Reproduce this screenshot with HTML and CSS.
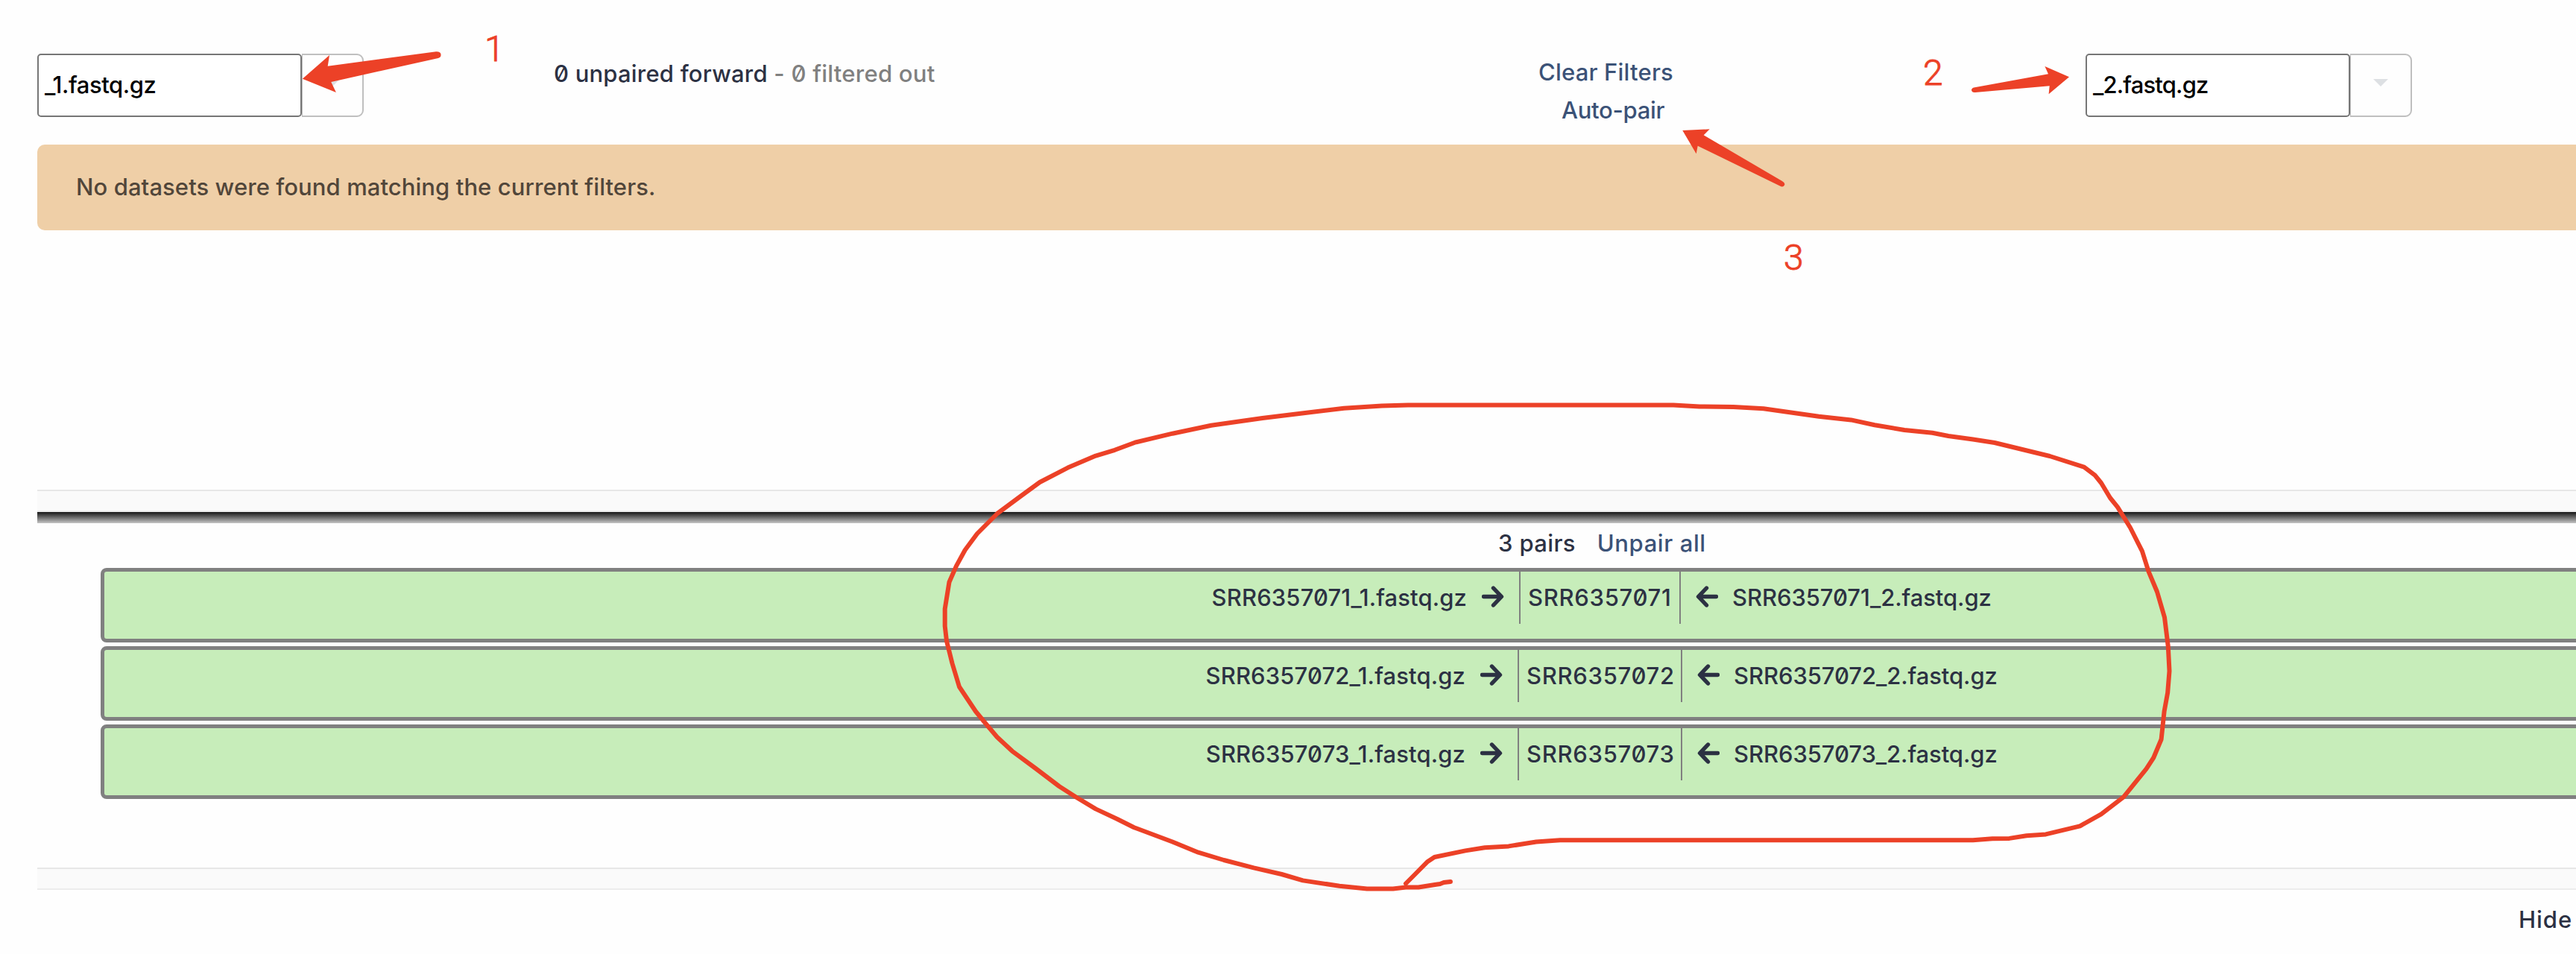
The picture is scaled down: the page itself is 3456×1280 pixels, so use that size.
FILE: index.html
```html
<!DOCTYPE html>
<html lang="en">
<head>
<meta charset="utf-8">
<title>Build list of dataset pairs</title>
<link rel="stylesheet" href="styles.css">
</head>
<body>
<svg class="sprite" aria-hidden="true">
  <symbol id="arrow-right" viewBox="0 0 30 29">
    <path d="M2.5 14.5H26M15.500 3L26.5 14.5L15.500 26" fill="none" stroke="currentColor" stroke-width="5.400" stroke-linecap="round" stroke-linejoin="round"/>
  </symbol>
  <symbol id="arrow-left" viewBox="0 0 30 29">
    <path d="M27.5 14.5H4M14.5 3L3.5 14.5L14.5 26" fill="none" stroke="currentColor" stroke-width="5.400" stroke-linecap="round" stroke-linejoin="round"/>
  </symbol>
</svg>

<main class="creator">
  <header class="filters">
    <div class="combo">
      <div class="combo-input combo-forward">_1.fastq.gz</div>
      <div class="combo-toggle"><span class="caret"></span></div>
    </div>
    <div class="status"><strong class="count">0 unpaired forward</strong> <span class="muted">- 0 filtered out</span></div>
    <nav class="actions">
      <a class="link clear">Clear Filters</a>
      <a class="link autopair">Auto-pair</a>
    </nav>
    <div class="combo">
      <div class="combo-input combo-reverse">_2.fastq.gz</div>
      <div class="combo-toggle"><span class="caret"></span></div>
    </div>
  </header>

  <section class="unpaired">
    <div class="alert">No datasets were found matching the current filters.</div>
  </section>

  <div class="divider"></div>

  <section class="paired">
    <div class="paired-header"><span class="pair-count">3 pairs</span><a class="link unpair">Unpair all</a></div>
    <ol class="pairs">
      <li class="pair">
        <div class="forward"><span class="forward-name">SRR6357071_1.fastq.gz</span><svg class="arrow"><use href="#arrow-right"/></svg></div>
        <div class="name">SRR6357071</div>
        <div class="reverse"><svg class="arrow"><use href="#arrow-left"/></svg><span class="reverse-name">SRR6357071_2.fastq.gz</span></div>
      </li>
      <li class="pair">
        <div class="forward"><span class="forward-name">SRR6357072_1.fastq.gz</span><svg class="arrow"><use href="#arrow-right"/></svg></div>
        <div class="name name-wide">SRR6357072</div>
        <div class="reverse"><svg class="arrow"><use href="#arrow-left"/></svg><span class="reverse-name">SRR6357072_2.fastq.gz</span></div>
      </li>
      <li class="pair">
        <div class="forward"><span class="forward-name">SRR6357073_1.fastq.gz</span><svg class="arrow"><use href="#arrow-right"/></svg></div>
        <div class="name name-wide">SRR6357073</div>
        <div class="reverse"><svg class="arrow"><use href="#arrow-left"/></svg><span class="reverse-name">SRR6357073_2.fastq.gz</span></div>
      </li>
    </ol>
  </section>

  <div class="divider"></div>
  <footer class="footer">Hide</footer>
</main>

<svg class="annotations" viewBox="0 0 3456 1280">
  <path class="mark" d="M405.8 105.7L442 74L439.7 88.7L585 69.3Q591 69 591.5 73Q592 77 588 78L444.2 110L450.9 124Z"/>
  <path class="mark" d="M2776 103.3L2743.4 89L2748 99.3L2648 117.5Q2645 118.500 2645 121Q2645.500 124.500 2650 124L2749.7 115.3L2748.6 126.3Z"/>
  <path class="mark" d="M2257.3 175L2293.7 173.3L2285.7 181.3L2391 243Q2395.500 245.500 2394 248.500Q2392 252 2388 249.500L2277.7 195.8L2275.7 206.3Z"/>
  <path class="loop" d="M1946 1183L1937 1184L1932 1186L1925 1187L1903 1190.5L1886 1190.5L1869 1192.4L1834 1192.4L1797 1188.7L1748 1181.4L1719.5 1173L1682 1164.4L1642 1154L1607.6 1143.7L1573 1129.5L1521.5 1110.2L1498.5 1098.7L1470 1085.4L1444 1069.8L1421 1055L1389.4 1031L1358 1007.8L1337.8 989L1323.4 972L1309 954.5L1287 921.5L1277.5 890L1270 860L1267.7 840L1267.7 817L1273.5 781L1283 759.4L1294.7 738L1311 716L1338 689L1369 666L1395 647L1432.5 627.6L1470 611.6L1495.6 603.8L1522.6 593.7L1573 581.7L1625 570.7L1693.7 561L1751 554L1803 547.8L1854 544.5L1889 543.4L2245 543.6L2280 545.5L2325.5 546L2366 548.2L2440 558.8L2483.4 563.4L2515 570.2L2555 577L2592.5 580.8L2614 585L2647 589.5L2676 594L2750 612L2796 626.7L2810.6 637.7L2819 648L2831 668L2841 680.4L2858 708L2874 739.7L2882.4 766.3L2894 794L2904 828.3L2908.8 867.3L2910.5 900.4L2908.2 929.3L2903.6 954.5L2899.6 992L2889.3 1016.5L2879.5 1031.7L2849 1069.3L2819 1092.3L2790.5 1108.4L2744.6 1119.4L2718.8 1121.2L2695.8 1124.9L2673 1125.3L2647 1127.2L2093 1127.2L2061 1129.5L2024 1135.4L1992 1137.3L1966 1141.4L1924.5 1150L1914.7 1156.6L1897.5 1174L1886 1185.5"/>
  <text class="step" x="650" y="82">1</text>
  <text class="step" x="2580" y="114">2</text>
  <text class="step" x="2393" y="362">3</text>
</svg>
</body>
</html>
```
FILE: styles.css
```css
* {
  box-sizing: border-box;
}

body {
  margin: 0;
  position: relative;
  width: 3456px;
  height: 1280px;
  overflow: hidden;
  background: #fefefe;
  color: #2c3143;
  font: 500 31px/51px Inter, "Liberation Sans", sans-serif;
  font-feature-settings: "zero";
  white-space: nowrap;
}

.sprite {
  display: none;
}

.creator {
  padding-left: 50px;
}

.link {
  color: #3b5277;
}

/* Filter bar */
.filters {
  display: grid;
  grid-template-columns: 693px 1321px 734px auto;
  align-items: start;
  height: 194px;
  padding-top: 71px;
}

.combo {
  display: flex;
  width: 438px;
  height: 86px;
  padding-top: 1px;
}

.combo-input {
  width: 355px;
  padding: 14px 8px;
  border: 2px solid #767676;
  border-radius: 5px;
  background: #fff;
  color: #000;
}

.combo-forward {
  letter-spacing: -0.43px;
}

.combo-reverse {
  letter-spacing: -0.84px;
}

.combo-toggle {
  display: flex;
  align-items: center;
  justify-content: center;
  width: 83px;
  padding-bottom: 7px;
  border: 2px solid #bfbfbf;
  border-left-width: 1px;
  border-radius: 0 9px 9px 0;
}

.caret {
  border: 10px solid transparent;
  border-top-color: #dde0e3;
  border-bottom: 0;
}

.status {
  padding-top: 2px;
  letter-spacing: 0.2px;
}

.count {
  font-weight: 500;
}

.muted {
  color: #808080;
  letter-spacing: 0.25px;
}

.actions {
  display: flex;
  flex-direction: column;
  align-items: flex-start;
}

.clear {
  letter-spacing: 0.2px;
}

.autopair {
  margin-left: 31px;
  letter-spacing: -0.29px;
}

/* Unpaired datasets */
.unpaired {
  height: 463px;
}

.alert {
  height: 115px;
  padding: 31px 52px;
  border-radius: 10px 0 0 10px;
  background: #efcfa7;
  color: #51463a;
  letter-spacing: 0.08px;
}

.divider {
  height: 30px;
  border-top: 2px solid #e7e7e7;
  border-bottom: 2px solid #ececec;
  background: #fafafa;
}

/* Paired datasets */
.paired {
  height: 477px;
  overflow: hidden;
  background: linear-gradient(#151515, #c6c6c6) 0 0 / 100% 15px no-repeat;
}

.paired-header {
  display: flex;
  gap: 29px;
  height: 75px;
  padding: 16px 0 0 1960px;
}

.pair-count {
  letter-spacing: 0.36px;
}

.unpair {
  letter-spacing: 0.6px;
}

.pairs {
  display: flex;
  flex-direction: column;
  gap: 5px;
  width: 4023px;
  margin: 0 0 0 85px;
  padding: 0;
  list-style: none;
}

.pair {
  display: grid;
  grid-template-columns: 1fr auto 1fr;
  height: 100px;
  border: 5px solid #808080;
  border-radius: 8px;
  background: #c7edba;
}

.forward,
.reverse {
  display: flex;
  height: 70px;
  padding: 9px 20px 0;
}

.forward {
  gap: 20px;
  justify-content: flex-end;
}

.reverse {
  gap: 19px;
}

.forward-name {
  letter-spacing: 0.12px;
}

.reverse-name {
  letter-spacing: -0.08px;
}

.name {
  width: 217px;
  height: 70px;
  padding: 9px 0 0 10px;
  border: solid #808080;
  border-width: 0 2px;
  letter-spacing: 0.7px;
}

.name-wide {
  width: 221px;
}

.arrow {
  width: 30px;
  height: 29px;
  margin-top: 10px;
}

.footer {
  padding: 14px 0 0 3329px;
  letter-spacing: 0.98px;
}

/* Hand-drawn markup over the page */
.annotations {
  position: absolute;
  inset: 0;
  width: 3456px;
  height: 1280px;
}

.mark {
  fill: #ec4127;
}

.loop {
  fill: none;
  stroke: #ec4127;
  stroke-width: 6;
  stroke-linecap: round;
  stroke-linejoin: round;
}

.step {
  fill: #ec4127;
  stroke: #ec4127;
  stroke-width: 0.9;
  font: 300 48px Roboto, "Liberation Sans", sans-serif;
}
```
